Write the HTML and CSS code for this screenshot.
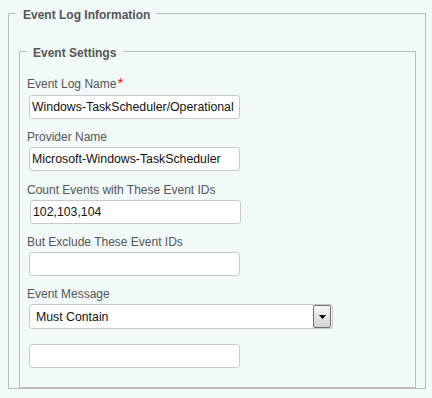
FILE: index.html
```html
<!doctype html>
<html>
	<head>
		<meta charset="utf-8" />
		<meta name="viewport" content="width=device-width, initial-scale=1" />
		<title>Event Log Information</title>
		<link rel="stylesheet" href="styles.css">
	</head>
	<body>
		<fieldset class="group">
			<legend>Event Log Information</legend>

			<fieldset class="group inner">
				<legend>Event Settings</legend>

				<div class="field">
					<label for="log_name">Event Log Name<span class="required">*</span></label>
					<input id="log_name" type="text" value="Windows-TaskScheduler/Operational" />
				</div>

				<div class="field">
					<label for="provider">Provider Name</label>
					<input id="provider" type="text" value="Microsoft-Windows-TaskScheduler" />
				</div>

				<div class="field">
					<label for="include_ids">Count Events with These Event IDs</label>
					<input id="include_ids" class="nudge" type="text" value="102,103,104" />
				</div>

				<div class="field">
					<label for="exclude_ids">But Exclude These Event IDs</label>
					<input id="exclude_ids" type="text" value="" />
				</div>

				<div class="field">
					<label for="message_mode">Event Message</label>
					<div class="dropdown">
						<select id="message_mode">
							<option selected>Must Contain</option>
							<option>Must Not Contain</option>
						</select>
						<span class="arrow" aria-hidden="true">
							<svg width="7" height="4" viewBox="0 0 7 4"><polygon points="0,0 7,0 3.5,4" fill="#000"/></svg>
						</span>
					</div>
					<input id="message_text" class="after-select" type="text" value="" />
				</div>
			</fieldset>
		</fieldset>
	</body>
</html>
```

FILE: styles.css
```css
* {
	box-sizing: border-box;
}

html {
	--font-main: "Liberation Sans", Arial, sans-serif;
	--color-bg: #f1f9f9;
	--color-line: #bcbcbc;
	--color-label: #555;
	--color-input-line: #c9c9c9;
}

body {
	margin: 0;
	background: var(--color-bg);
	font-family: var(--font-main);
	font-size: 12px;
	color: var(--color-label);
}

fieldset.group {
	margin: 3px 6px 0 8px;
	padding: 18px 9px 0 10px;
	border: 1px solid var(--color-line);
	min-width: 0;
}

fieldset.group legend {
	margin-left: -3px;
	padding: 4px 6px 0 7px;
	font-weight: bold;
	line-height: 16px;
	color: var(--color-label);
}

fieldset.inner {
	margin: 0;
	padding: 16px 8px 19px 7px;
}

fieldset.inner legend {
	margin-left: 0;
	padding: 4px 7px 0 6px;
}

.field {
	margin-bottom: 11.25px;
}

.field:last-child {
	margin-bottom: 0;
}

label {
	display: block;
	line-height: 14px;
	margin-bottom: 3px;
	white-space: nowrap;
}

.required {
	color: #e8141b;
	font-size: 15px;
	line-height: 1;
	vertical-align: top;
	margin-left: 1px;
	position: relative;
	top: -2px;
}

input[type="text"] {
	display: block;
	width: 211px;
	height: 24px;
	margin: 0 0 0 2px;
	padding: 0 2px;
	border: 1px solid var(--color-input-line);
	border-radius: 3px;
	background: #fff;
	font-family: var(--font-main);
	font-size: 12.3px;
	color: #111;
}

input.nudge {
	margin-left: 3px;
}

input.after-select {
	margin-top: 15px;
}

.dropdown {
	display: flex;
	width: 304px;
	height: 25px;
	margin-left: 2px;
	border: 1px solid var(--color-input-line);
	border-radius: 3px;
	background: #fff;
}

.dropdown select {
	flex: 1;
	appearance: none;
	-webkit-appearance: none;
	border: none;
	background: transparent;
	padding: 0 0 0 6px;
	font-family: var(--font-main);
	font-size: 12.3px;
	color: #111;
	outline: none;
}

.arrow {
	display: flex;
	align-items: center;
	justify-content: center;
	width: 18px;
	margin: 0 1px 0 0;
	border: 1px solid #6f6f6f;
	border-radius: 2px;
	background: linear-gradient(#f7f7f7, #d2d2d2);
}

.arrow svg {
	display: block;
	margin-top: 1px;
}
```
